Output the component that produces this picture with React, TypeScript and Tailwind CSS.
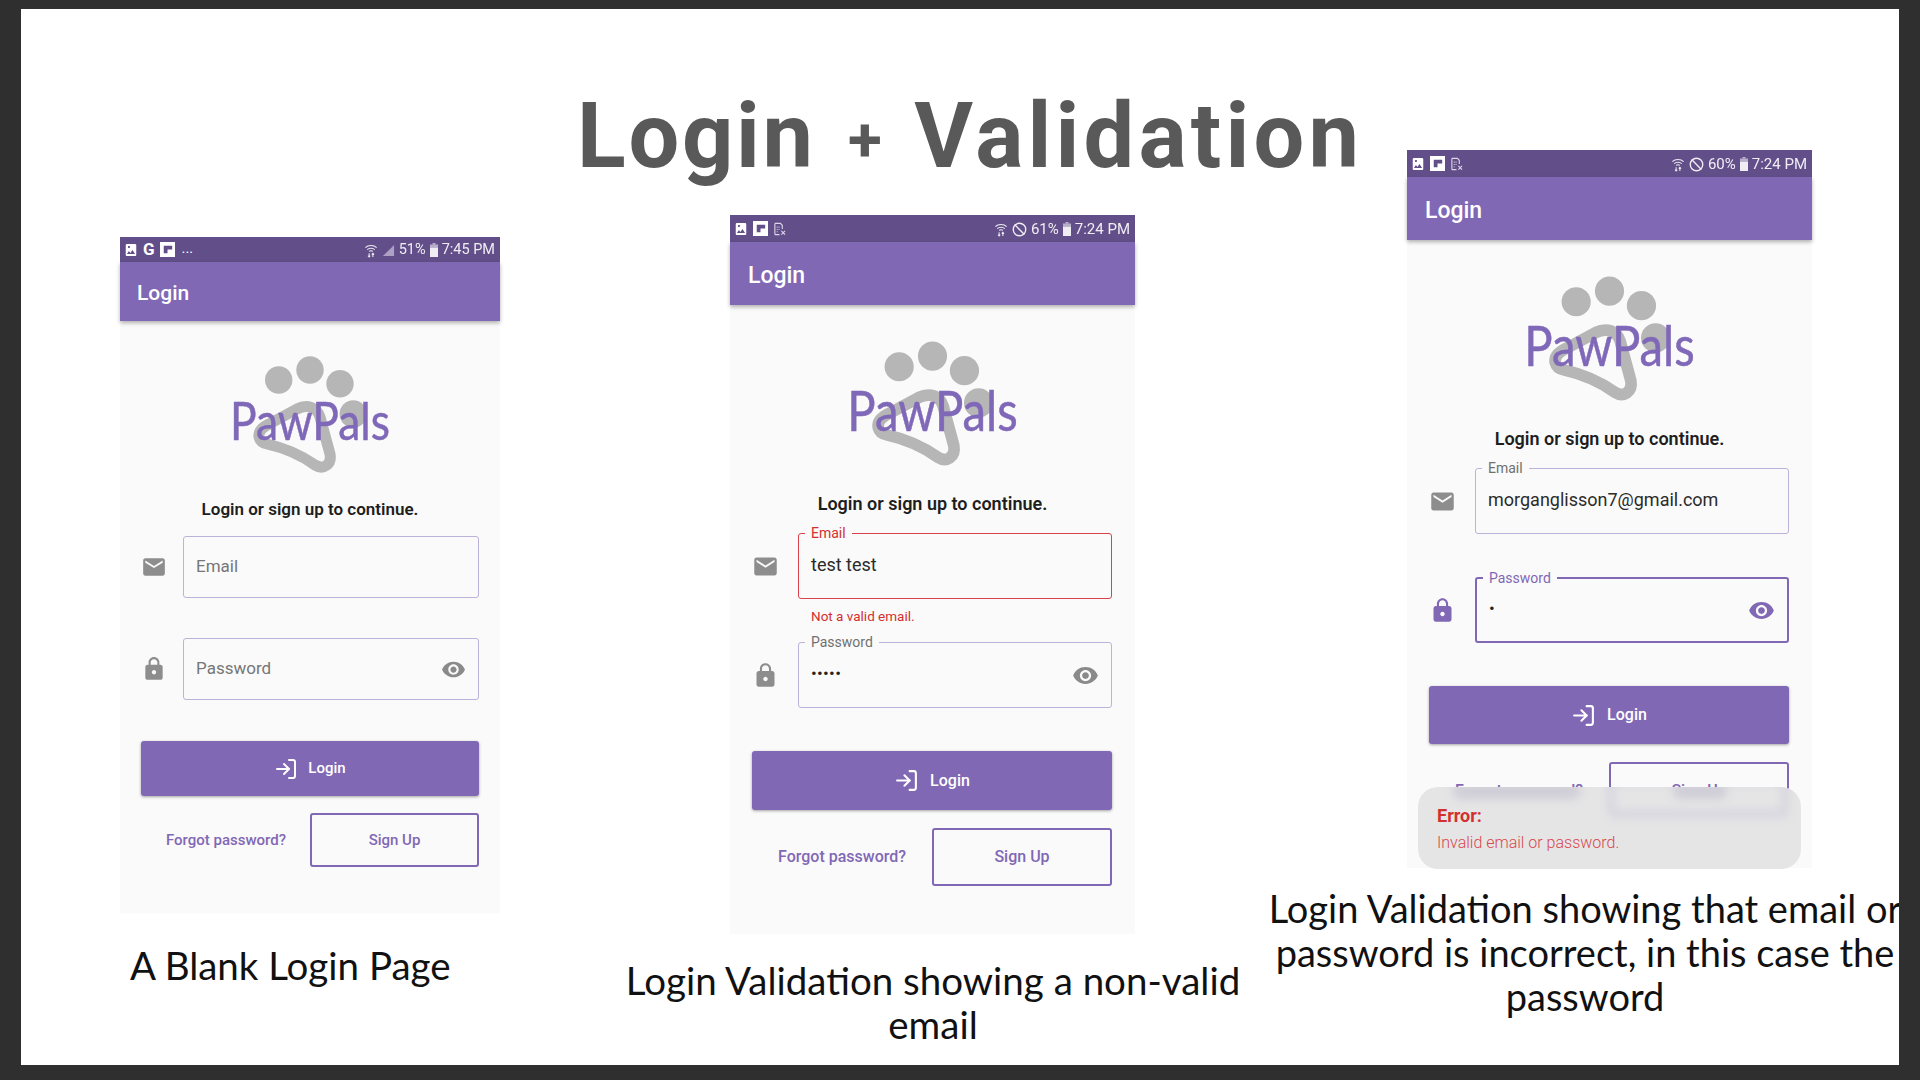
import { Ban, LogIn } from "lucide-react";

const MAIL_PATH = "M20 4H4c-1.1 0-1.99.9-1.99 2L2 18c0 1.1.9 2 2 2h16c1.1 0 2-.9 2-2V6c0-1.1-.9-2-2-2zm0 4l-8 5-8-5V6l8 5 8-5v2z";
const LOCK_PATH = "M18 8h-1V6c0-2.76-2.24-5-5-5S7 3.24 7 6v2H6c-1.1 0-2 .9-2 2v10c0 1.1.9 2 2 2h12c1.1 0 2-.9 2-2V10c0-1.1-.9-2-2-2zm-6 9c-1.1 0-2-.9-2-2s.9-2 2-2 2 .9 2 2-.9 2-2 2zm3.1-9H8.9V6c0-1.71 1.39-3.1 3.1-3.1 1.71 0 3.1 1.39 3.1 3.1v2z";
const EYE_PATH = "M12 4.5C7 4.5 2.73 7.61 1 12c1.73 4.39 6 7.5 11 7.5s9.27-3.11 11-7.5c-1.73-4.39-6-7.5-11-7.5zM12 17c-2.76 0-5-2.24-5-5s2.24-5 5-5 5 2.24 5 5-2.24 5-5 5zm0-8c-1.66 0-3 1.34-3 3s1.34 3 3 3 3-1.34 3-3-1.34-3-3-3z";

function Paw({ className }: { className: string }) {
  return (
    <svg viewBox="0 0 170 120" className={`overflow-visible ${className}`}>
      <circle cx="53.7" cy="25" r="13.7" fill="#b6b6b6" />
      <circle cx="85" cy="15" r="13.7" fill="#b6b6b6" />
      <circle cx="115" cy="28.7" r="13.7" fill="#b6b6b6" />
      <circle cx="128.3" cy="59" r="13.7" fill="#b6b6b6" />
      <path
        d="M34 82 C33 76 38 72 44 69 L72 54 C82 49 92 52 95 62 L105 99 C107 110 98 115 90 110 C76 100 60 93 42 89 C37 88 35 86 34 82 Z"
        fill="none"
        stroke="#b6b6b6"
        strokeWidth="11"
        strokeLinejoin="round"
      />
      <text
        x="85"
        y="85"
        textAnchor="middle"
        fontFamily="'Lato', sans-serif"
        fontSize="52"
        textLength="160"
        lengthAdjust="spacingAndGlyphs"
        fill="#7f68b8"
        stroke="#7f68b8"
        strokeWidth="0.5"
        strokeLinejoin="round"
      >
        PawPals
      </text>
    </svg>
  );
}

function PhotoIcon() {
  return (
    <svg viewBox="0 0 24 24" className="h-[16px] w-[14px]" preserveAspectRatio="none" fill="white">
      <path d="M21 19V5c0-1.1-.9-2-2-2H5c-1.1 0-2 .9-2 2v14c0 1.1.9 2 2 2h14c1.1 0 2-.9 2-2zM8.5 13.5l2.5 3.01L14.5 12l4.5 6H5l3.5-4.5zM7 6h3v3H7z" fillRule="evenodd" />
    </svg>
  );
}

function FlipIcon() {
  return (
    <svg viewBox="0 0 16 16" className="h-[15px] w-[15px]">
      <rect width="16" height="16" fill="white" />
      <path d="M4 4 H13 V8 H8 V12 H4 Z" fill="#624f8a" />
    </svg>
  );
}

function SimIcon() {
  return (
    <svg viewBox="0 0 14 14" className="h-[14px] w-[13px]" fill="none" stroke="#dcd6e8" strokeWidth="1.2">
      <path d="M2 1 H8 L10 3 V7 M7 13 H2 Z M2 1 V13" />
      <path d="M4 5 H8 M4 7.5 H7 M4 10 H6" strokeDasharray="1 1" />
      <path d="M9 9 L13 13 M13 9 L9 13" />
    </svg>
  );
}

function WifiIcon() {
  return (
    <svg viewBox="0 0 14 16" className="h-[15px] w-[14px]" fill="none" stroke="white" strokeWidth="1.1">
      <path d="M1 5 C4 2 10 2 13 5" />
      <path d="M3 7 C5 5 9 5 11 7" />
      <path d="M5 9 C6 8 8 8 9 9" />
      <path d="M5 11 V15 M3.8 13.6 L5 15 L6.2 13.6 M9 15 V11 M7.8 12.4 L9 11 L10.2 12.4" />
    </svg>
  );
}

function BatteryIcon() {
  return (
    <svg viewBox="0 0 8 14" className="h-[14px] w-[8px]" fill="white">
      <rect x="2.5" y="0" width="3" height="1.5" opacity="0.6" />
      <rect x="0" y="1.5" width="8" height="3" opacity="0.6" />
      <rect x="0" y="4.5" width="8" height="9.5" />
    </svg>
  );
}

function StatusBar({ left, pct, time, big }: { left: "g" | "x"; pct: string; time: string; big?: boolean }) {
  return (
    <div className={`flex items-center justify-between bg-[#624f8a] pl-1 pr-[5px] text-white ${big ? "h-[27px] text-[15px]" : "h-[25px] text-[14.5px]"}`}>
      <div className="flex items-center gap-[5px]">
        <PhotoIcon />
        {left === "g" && <span className="text-[17px] leading-none font-bold">G</span>}
        <FlipIcon />
        {left === "g" ? <span className="ml-0.5 leading-none">...</span> : <SimIcon />}
      </div>
      <div className="flex items-center gap-[4px] pt-px opacity-90">
        <WifiIcon />
        {left === "g" ? (
          <svg viewBox="0 0 14 14" className="h-[13px] w-[13px]">
            <path d="M1 13 L13 1 V13 Z" fill="#b5a9cc" />
          </svg>
        ) : (
          <Ban size={15} strokeWidth={2.2} />
        )}
        <span>{pct}</span>
        <BatteryIcon />
        <span>{time}</span>
      </div>
    </div>
  );
}

function Field({
  label,
  value,
  dots,
  tone,
  eye,
  size,
  className,
}: {
  label: string;
  value?: string;
  dots?: string;
  tone: "idle" | "error" | "focus";
  eye?: boolean;
  size: number;
  className: string;
}) {
  const border =
    tone === "error"
      ? "border-[#d8434b]"
      : tone === "focus"
        ? "border-2 border-[#8168b5]"
        : "border-[#bcb2dc]";
  const labelColor = tone === "error" ? "text-[#d32f2f]" : tone === "focus" ? "text-[#8168b5]" : "text-[#707070]";
  const hasValue = value || dots;
  return (
    <div className={`relative flex items-center rounded-[3px] border bg-[#fafafa] ${border} ${className}`}>
      {hasValue && (
        <span className={`absolute -top-[9px] left-[6px] bg-[#fafafa] px-[6px] text-[14px] leading-4 ${labelColor}`}>{label}</span>
      )}
      {value && <span className="pl-[12px] pb-1 text-[18px] text-[#2b2b2b]">{value}</span>}
      {dots && <span className="pl-[12px] pb-1 text-[17px] leading-none tracking-[0.3px] text-[#222]">{dots}</span>}
      {!hasValue && <span className="pl-[12px] text-[17px] text-[#767676]">{label}</span>}
      {eye && (
        <svg
          viewBox="0 0 24 24"
          style={{ width: size, height: size }}
          className={`mr-[12px] ml-auto ${tone === "focus" ? "fill-[#8168b5]" : "fill-[#8a8a8a]"}`}
        >
          <path d={EYE_PATH} />
        </svg>
      )}
    </div>
  );
}

function FormIcon({ kind, focus, size }: { kind: "mail" | "lock"; focus?: boolean; size: number }) {
  return (
    <svg viewBox="0 0 24 24" style={{ width: size, height: size }} fill={focus ? "#8168b5" : "#8d8d8d"}>
      <path d={kind === "mail" ? MAIL_PATH : LOCK_PATH} />
    </svg>
  );
}

function AppBar({ big }: { big?: boolean }) {
  return (
    <div className={`relative z-10 flex items-center bg-[#8168b5] pt-[5px] font-medium text-white shadow-[0_2px_4px_rgba(0,0,0,0.3)] ${big ? "h-[63px] pl-[18px] text-[23px]" : "h-[59px] pl-[17px] text-[21px]"}`}>
      Login
    </div>
  );
}

function PhoneOne() {
  return (
    <div className="absolute top-[228px] left-[99px] h-[676px] w-[380px] bg-[#fafafa]">
      <StatusBar left="g" pct="51%" time="7:45 PM" />
      <AppBar />
      <Paw className="mx-auto mt-[34px] h-[120px] w-[170px]" />
      <p className="mt-[24px] text-center text-[17px] leading-5 font-semibold text-[#1e1e1e]">Login or sign up to continue.</p>
      <div className="mt-[17px] ml-[21px] flex flex-col">
        <div className="flex items-center">
          <div className="w-[42px]"><FormIcon kind="mail" size={26} /></div>
          <Field label="Email" tone="idle" size={25} className="h-[62px] w-[296px]" />
        </div>
        <div className="mt-[40px] flex items-center">
          <div className="w-[42px]"><FormIcon kind="lock" size={26} /></div>
          <Field label="Password" tone="idle" eye size={25} className="h-[62px] w-[296px]" />
        </div>
        <button className="mt-[41px] flex h-[55px] w-[338px] items-center justify-center gap-[10px] rounded-[3px] bg-[#8168b5] text-[15px] font-medium text-white shadow-[0_1px_3px_rgba(0,0,0,0.35)]">
          <LogIn size={24} strokeWidth={2} />
          Login
        </button>
        <div className="mt-[17px] flex w-[338px] items-center">
          <span className="ml-[25px] text-[15px] font-medium text-[#8168b5]">Forgot password?</span>
          <span className="ml-auto flex h-[54px] w-[169px] items-center justify-center rounded-[3px] border-2 border-[#8168b5] text-[15px] font-medium text-[#8168b5]">Sign Up</span>
        </div>
      </div>
    </div>
  );
}

function PhoneTwo() {
  return (
    <div className="absolute top-[206px] left-[709px] h-[719px] w-[405px] bg-[#fafafa]">
      <StatusBar left="x" pct="61%" time="7:24 PM" big />
      <AppBar big />
      <Paw className="mx-auto mt-[35px] h-[128px] w-[181px]" />
      <p className="mt-[26px] text-center text-[18px] leading-5 font-semibold text-[#1e1e1e]">Login or sign up to continue.</p>
      <div className="mt-[19px] ml-[22px] flex flex-col">
        <div className="flex items-center">
          <div className="w-[46px]"><FormIcon kind="mail" size={27} /></div>
          <Field label="Email" value="test test" tone="error" size={27} className="h-[66px] w-[314px]" />
        </div>
        <p className="mt-[9px] ml-[59px] text-[13.5px] leading-4 text-[#d32f2f]">Not a valid email.</p>
        <div className="mt-[18px] flex items-center">
          <div className="w-[46px]"><FormIcon kind="lock" size={27} /></div>
          <Field label="Password" dots="•••••" tone="idle" eye size={27} className="h-[66px] w-[314px]" />
        </div>
        <button className="mt-[43px] flex h-[59px] w-[360px] items-center justify-center gap-[11px] rounded-[3px] bg-[#8168b5] text-[16px] font-medium text-white shadow-[0_1px_3px_rgba(0,0,0,0.35)]">
          <LogIn size={25} strokeWidth={2} />
          Login
        </button>
        <div className="mt-[18px] flex w-[360px] items-center">
          <span className="ml-[26px] text-[16px] font-medium text-[#8168b5]">Forgot password?</span>
          <span className="ml-auto flex h-[58px] w-[180px] items-center justify-center rounded-[3px] border-2 border-[#8168b5] text-[16px] font-medium text-[#8168b5]">Sign Up</span>
        </div>
      </div>
    </div>
  );
}

function PhoneThree() {
  return (
    <div className="absolute top-[141px] left-[1386px] h-[718px] w-[405px] bg-[#fafafa]">
      <StatusBar left="x" pct="60%" time="7:24 PM" big />
      <AppBar big />
      <Paw className="mx-auto mt-[35px] h-[128px] w-[181px]" />
      <p className="mt-[26px] text-center text-[18px] leading-5 font-semibold text-[#1e1e1e]">Login or sign up to continue.</p>
      <div className="mt-[19px] ml-[22px] flex flex-col">
        <div className="flex items-center">
          <div className="w-[46px]"><FormIcon kind="mail" size={27} /></div>
          <Field label="Email" value="morganglisson7@gmail.com" tone="idle" size={27} className="h-[66px] w-[314px]" />
        </div>
        <div className="mt-[43px] flex items-center">
          <div className="w-[46px]"><FormIcon kind="lock" focus size={27} /></div>
          <Field label="Password" dots="•" tone="focus" eye size={27} className="h-[66px] w-[314px]" />
        </div>
        <button className="mt-[43px] flex h-[58px] w-[360px] items-center justify-center gap-[11px] rounded-[3px] bg-[#8168b5] text-[16px] font-medium text-white shadow-[0_1px_3px_rgba(0,0,0,0.35)]">
          <LogIn size={25} strokeWidth={2} />
          Login
        </button>
        <div className="mt-[18px] flex w-[360px] items-center">
          <span className="ml-[26px] text-[16px] font-medium text-[#8168b5]">Forgot password?</span>
          <span className="ml-auto flex h-[58px] w-[180px] items-center justify-center rounded-[3px] border-2 border-[#8168b5] text-[16px] font-medium text-[#8168b5]">Sign Up</span>
        </div>
      </div>
      <div className="absolute top-[637px] left-[11px] h-[82px] w-[383px] overflow-hidden rounded-[20px] bg-[#e5e5e6] pt-[19px] pl-[19px]">
        <div className="absolute top-[-4px] left-[35px] h-[16px] w-[128px] rounded-full bg-[#cfcdd6] blur-[5px]" />
        <div className="absolute top-[-10px] left-[190px] h-[40px] w-[180px] rounded-md border-[6px] border-[#d3d1dc] blur-[5px]" />
        <div className="absolute top-[-4px] left-[255px] h-[16px] w-[54px] rounded-full bg-[#cfcdd6] blur-[4px]" />
        <p className="relative text-[18px] leading-5 font-bold text-[#d32f2f]">Error:</p>
        <p className="relative mt-[7px] text-[16px] leading-5 font-light text-[#d9474d]">Invalid email or password.</p>
      </div>
    </div>
  );
}

export default function App() {
  return (
    <div className="h-[1080px] w-[1920px] overflow-hidden bg-[#2f2f2f] pt-[9px] pl-[21px] font-['Roboto',sans-serif]">
      <div className="relative h-[1056px] w-[1878px] overflow-hidden bg-white">
        <h1 className="pt-[78px] pl-[556px] text-[90px] leading-[100px] font-bold [word-spacing:10px] text-[#595959]">
          <span className="tracking-[2.7px]">Login</span> <span className="text-[62px] align-[6px]">+</span> <span className="tracking-[4.2px]">Validation</span>
        </h1>
        <PhoneOne />
        <PhoneTwo />
        <PhoneThree />
        <p className="absolute top-[934px] left-[109px] text-[38.5px] leading-[44px] text-[#111] font-['Lato',sans-serif]">A Blank Login Page</p>
        <p className="absolute top-[949px] left-[592px] w-[640px] text-center text-[38.5px] leading-[44px] text-[#111] font-['Lato',sans-serif]">
          Login Validation showing a non-valid email
        </p>
        <p className="absolute top-[877px] left-[1214px] w-[700px] text-center text-[38px] leading-[44px] text-[#111] font-['Lato',sans-serif]">
          Login Validation showing that email or password is incorrect, in this case the password
        </p>
      </div>
    </div>
  );
}
